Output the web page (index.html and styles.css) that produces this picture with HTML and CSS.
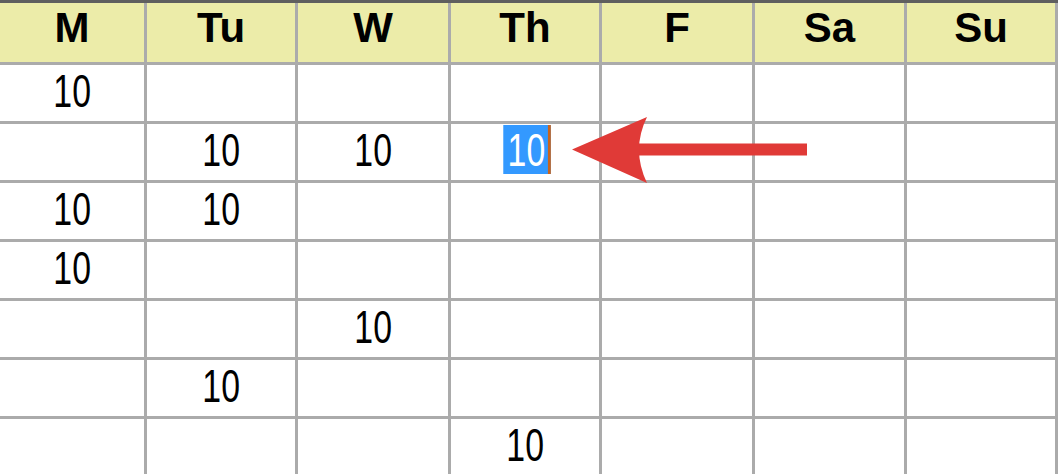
FILE: index.html
```html
<!DOCTYPE html>
<html>
<head>
<meta charset="utf-8">
<link rel="stylesheet" href="styles.css">
</head>
<body>
<div class="grid">
  <div class="hd">M</div><div class="hd">Tu</div><div class="hd">W</div><div class="hd">Th</div><div class="hd">F</div><div class="hd">Sa</div><div class="hd">Su</div>

  <div class="cell"><span class="num">10</span></div><div class="cell"></div><div class="cell"></div><div class="cell"></div><div class="cell"></div><div class="cell"></div><div class="cell"></div>

  <div class="cell"></div><div class="cell"><span class="num">10</span></div><div class="cell"><span class="num">10</span></div><div class="cell"><span class="num sel">10</span></div><div class="cell"></div><div class="cell"></div><div class="cell"></div>

  <div class="cell"><span class="num">10</span></div><div class="cell"><span class="num">10</span></div><div class="cell"></div><div class="cell"></div><div class="cell"></div><div class="cell"></div><div class="cell"></div>

  <div class="cell"><span class="num">10</span></div><div class="cell"></div><div class="cell"></div><div class="cell"></div><div class="cell"></div><div class="cell"></div><div class="cell"></div>

  <div class="cell"></div><div class="cell"></div><div class="cell"><span class="num">10</span></div><div class="cell"></div><div class="cell"></div><div class="cell"></div><div class="cell"></div>

  <div class="cell"></div><div class="cell"><span class="num">10</span></div><div class="cell"></div><div class="cell"></div><div class="cell"></div><div class="cell"></div><div class="cell"></div>

  <div class="cell"></div><div class="cell"></div><div class="cell"></div><div class="cell"><span class="num">10</span></div><div class="cell"></div><div class="cell"></div><div class="cell"></div>
</div>

<svg class="arrow" width="1058" height="474" viewBox="0 0 1058 474" xmlns="http://www.w3.org/2000/svg">
  <rect x="636" y="143.5" width="171" height="12" fill="#e03a37"/>
  <path d="M572 149.5 L647 117 Q631 149.5 647 183 Z" fill="#e03a37"/>
</svg>
</body>
</html>
```

FILE: styles.css
```css
html, body {
  margin: 0;
  padding: 0;
  width: 1058px;
  height: 474px;
  overflow: hidden;
  background: #ffffff;
}

body {
  position: relative;
  font-family: "Liberation Sans", Arial, sans-serif;
  color: #000000;
}

.grid {
  display: grid;
  grid-template-columns: 147px 151px 153px 151px 153px 152px 151px;
  grid-auto-rows: 59px;
  grid-template-rows: 62px;
  border-top: 3px solid #5f5f5f;
}

.hd,
.cell {
  border-right: 3px solid #ababab;
  border-bottom: 3px solid #ababab;
  display: flex;
  align-items: center;
  justify-content: center;
}

.hd {
  background: #ececa9;
  font-weight: bold;
  font-size: 42px;
  padding-bottom: 9px;
}

.cell {
  background: #ffffff;
  padding-bottom: 6px;
}

.num {
  display: inline-block;
  font-size: 47px;
  line-height: 49px;
  height: 49px;
  transform: scaleX(0.72);
}

.sel {
  background: #3399ff;
  color: #ffffff;
  padding: 0 4px 0 6px;
  border-right: 4px solid #c8641e;
  margin-left: 4px;
}

.arrow {
  position: absolute;
  left: 0;
  top: 0;
  pointer-events: none;
}
```
